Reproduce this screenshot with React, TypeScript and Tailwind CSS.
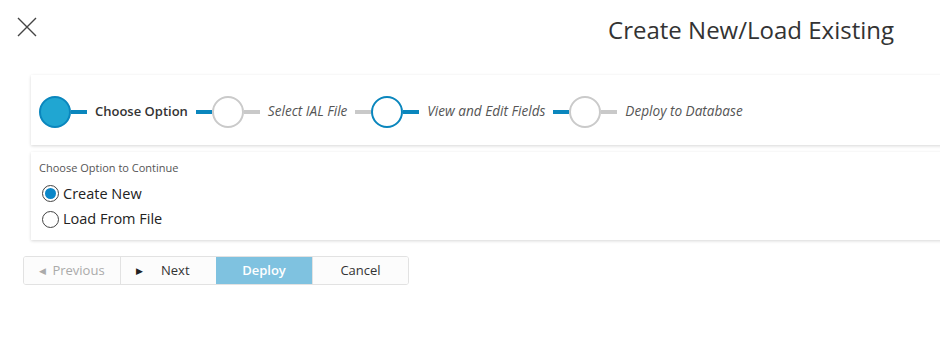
type Step = { label: string; state: "done" | "active" | "todo"; before: string; after: string };

const steps: Step[] = [
    { label: "Choose Option", state: "done", before: "", after: "bg-[#0a86bd]" },
    { label: "Select IAL File", state: "todo", before: "bg-[#0a86bd]", after: "bg-[#c9c9c9]" },
    { label: "View and Edit Fields", state: "active", before: "bg-[#c9c9c9]", after: "bg-[#0a86bd]" },
    { label: "Deploy to Database", state: "todo", before: "bg-[#0a86bd]", after: "bg-[#c9c9c9]" },
];

const StepItem = ({ step }: { step: Step }) => {
    const circle =
        step.state === "done"
            ? "bg-[#20a6d2] border-[#0a86bd]"
            : step.state === "active"
            ? "bg-white border-[#0a86bd]"
            : "bg-white border-[#cacaca]";
    return (
        <div className="flex items-center">
            {step.before && <div className={`w-4 h-1 ${step.before}`} />}
            <div className={`w-[32px] h-[32px] rounded-full border-2 ${circle}`} />
            <div className={`w-4 h-1 ${step.after}`} />
            <span
                className={
                    step.state === "done"
                        ? "ml-2 mr-2 text-[13px] font-semibold text-[#333]"
                        : "ml-2 mr-2 text-[13.6px] italic text-[#555]"
                }
            >
                {step.label}
            </span>
        </div>
    );
};

export default function App() {
    return (
        <div className="w-[940px] h-[347px] overflow-hidden bg-white font-['Open_Sans',sans-serif] text-[#333]">
            {/* header */}
            <div className="flex items-center justify-between h-[60px] pl-[17px] pr-[46px]">
                <svg width="20" height="20" viewBox="0 0 20 20" className="-mt-[6px]">
                    <path d="M1 1L19 19M19 1L1 19" stroke="#444" strokeWidth="1.4" fill="none" />
                </svg>
                <h1 className="text-[24px] text-[#333] leading-none">Create New/Load Existing</h1>
            </div>

            {/* wizard steps */}
            <div className="ml-[31px] mt-[15px] w-[930px] h-[70px] bg-white shadow-[0_1px_3px_rgba(0,0,0,0.16)] flex items-center pl-[8px] pt-[3px]">
                {steps.map((s) => (
                    <StepItem key={s.label} step={s} />
                ))}
            </div>

            {/* options card */}
            <div className="ml-[31px] mt-[7px] w-[930px] h-[88px] bg-white shadow-[0_1px_3px_rgba(0,0,0,0.16)] pl-[8px] pt-[8px]">
                <p className="text-[11px] text-[#555]">Choose Option to Continue</p>
                <label className="flex items-center mt-[6px] text-[14.5px] text-[#222]">
                    <span className="w-[17px] h-[17px] rounded-full border border-[#444] bg-white flex items-center justify-center mr-[4px] ml-[3px]">
                        <span className="w-[11px] h-[11px] rounded-full bg-[#0a86c8]" />
                    </span>
                    Create New
                </label>
                <label className="flex items-center mt-[4px] text-[14.5px] text-[#222]">
                    <span className="w-[17px] h-[17px] rounded-full border border-[#444] bg-white mr-[4px] ml-[3px]" />
                    Load From File
                </label>
            </div>

            {/* buttons */}
            <div className="ml-[23px] mt-[16px] flex w-fit border border-[#e2e2e2] rounded-[3px] overflow-hidden h-[29px] text-[13px]">
                <button className="w-[96px] flex items-center justify-center gap-[6px] text-[#aaa] bg-[#fcfcfc]">
                    <span className="text-[9px]">◀</span>Previous
                </button>
                <button className="w-[96px] flex items-center pl-[15px] gap-[18px] text-[#333] bg-[#fcfcfc] border-l border-[#e2e2e2]">
                    <span className="text-[9px] text-[#222]">▶</span>Next
                </button>
                <button className="w-[96px] flex items-center justify-center text-white bg-[#7fc2e0] font-semibold">
                    Deploy
                </button>
                <button className="w-[96px] flex items-center justify-center text-[#333] bg-[#fcfcfc] border-l border-[#e2e2e2]">
                    Cancel
                </button>
            </div>
        </div>
    );
}
